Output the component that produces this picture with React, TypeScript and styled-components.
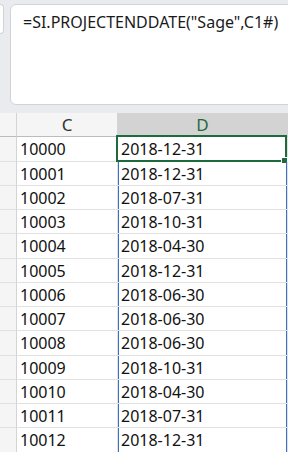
import React from 'react';
import styled, { createGlobalStyle } from 'styled-components';

const GlobalStyle = createGlobalStyle`
  html, body {
    margin: 0;
    padding: 0;
    background: #ffffff;
    overflow: hidden;
  }
`;

const Page = styled.div`
  width: 288px;
  height: 452px;
  overflow: hidden;
  font-family: 'Noto Sans', 'Open Sans', sans-serif;
`;

const FormulaArea = styled.div`
  display: flex;
  align-items: flex-start;
  gap: 6px;
  height: 113px;
  padding-top: 4px;
  box-sizing: border-box;
  background: #e9ebef;
`;

const NameBoxEdge = styled.div`
  width: 3px;
  height: 28px;
  background: #ffffff;
  border: 1px solid #d1d3d6;
  border-left: none;
  border-radius: 0 5px 5px 0;
  flex-shrink: 0;
`;

const FormulaBox = styled.div`
  flex: 1;
  margin-right: -20px;
  height: 101px;
  box-sizing: border-box;
  background: #ffffff;
  border: 1px solid #d1d3d6;
  border-radius: 6px;
  padding: 6px 12px;
  font-size: 16px;
  color: #1a1a1a;
  white-space: nowrap;
`;

const Sheet = styled.div`
  display: grid;
  grid-template-columns: 17px 101px 170px;
  grid-auto-rows: 24.25px;
  font-size: 16px;
  color: #111111;
`;

const HeaderCell = styled.div<{ $selected?: boolean }>`
  display: flex;
  align-items: center;
  justify-content: center;
  height: 24px;
  box-sizing: border-box;
  background: ${({ $selected }) => ($selected ? '#d3d3d3' : '#f5f5f5')};
  color: ${({ $selected }) => ($selected ? '#1d6b3c' : '#333333')};
  border-right: 1px solid #d4d4d4;
  border-bottom: 1px solid #bcbcbc;
  font-size: 17px;
`;

const Cell = styled.div<{ $spill?: boolean }>`
  position: relative;
  display: flex;
  align-items: center;
  padding: 1px 0 0 3px;
  box-sizing: border-box;
  border-right: 1px solid #e1e1e1;
  border-bottom: 1px solid #e1e1e1;
  box-shadow: ${({ $spill }) => ($spill ? 'inset 1px 0 0 #3b6fce, inset -1px 0 0 #3b6fce' : 'none')};
  white-space: nowrap;
`;

const RowHead = styled(Cell)`
  background: #f5f5f5;
  border-right: 1px solid #d4d4d4;
  padding: 0;
`;

const Selection = styled.div`
  position: absolute;
  left: -2px;
  top: -2px;
  right: 0px;
  bottom: -1px;
  border: 2px solid #1d6b3c;
  pointer-events: none;
`;

const FillHandle = styled.div`
  position: absolute;
  right: -3px;
  bottom: -4px;
  width: 5px;
  height: 5px;
  background: #1d6b3c;
  border: 1px solid #ffffff;
`;

const rows: [string, string][] = [
  ['10000', '2018-12-31'],
  ['10001', '2018-12-31'],
  ['10002', '2018-07-31'],
  ['10003', '2018-10-31'],
  ['10004', '2018-04-30'],
  ['10005', '2018-12-31'],
  ['10006', '2018-06-30'],
  ['10007', '2018-06-30'],
  ['10008', '2018-06-30'],
  ['10009', '2018-10-31'],
  ['10010', '2018-04-30'],
  ['10011', '2018-07-31'],
  ['10012', '2018-12-31'],
  ['', ''],
];

export default function App() {
  return (
    <Page>
      <GlobalStyle />
      <FormulaArea>
        <NameBoxEdge />
        <FormulaBox>=SI.PROJECTENDDATE("Sage",C1#)</FormulaBox>
      </FormulaArea>
      <Sheet>
        <HeaderCell />
        <HeaderCell>C</HeaderCell>
        <HeaderCell $selected>D</HeaderCell>
        {rows.map(([c, d], i) => (
          <React.Fragment key={i}>
            <RowHead />
            <Cell>{c}</Cell>
            <Cell $spill={i > 0}>
              {d}
              {i === 0 && (
                <Selection>
                  <FillHandle />
                </Selection>
              )}
            </Cell>
          </React.Fragment>
        ))}
      </Sheet>
    </Page>
  );
}
